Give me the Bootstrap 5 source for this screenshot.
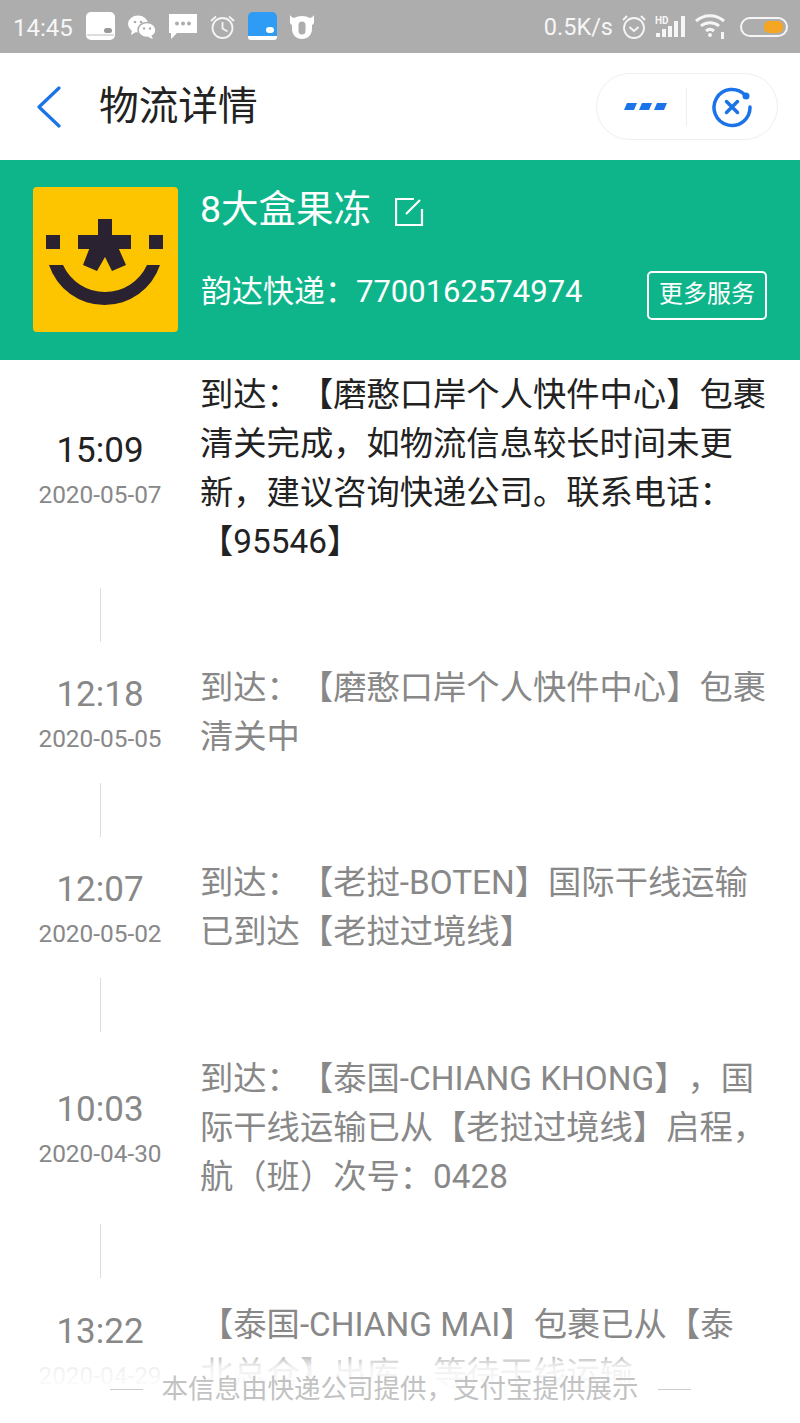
<!DOCTYPE html>
<html lang="zh">
<head>
    <meta charset="UTF-8">
    <meta name="viewport" content="width=device-width, initial-scale=1">
    <title>物流详情</title>

    <link href="https://cdn.jsdelivr.net/npm/bootstrap@5.3.2/dist/css/bootstrap.min.css" rel="stylesheet">

    <style>
        body {
            background-color: #fff;
            font-family: Roboto, "Noto Sans CJK SC", sans-serif;
            text-spacing-trim: space-all;
        }

        .phone-page {
            height: 1423px;
            overflow: hidden;
            position: relative;
        }

        /* Barra de estado */
        .status-bar {
            height: 53px;
            background-color: #adadad;
            color: #f6f6f6;
            font-size: 23.500px;
            padding: 0 12px 0 13px;
        }

        .status-left { gap: 13px; }
        .status-right { gap: 9px; }
        .status-clock { font-size: 24px; width: 60px; padding-top: 3px; }
        .status-speed { padding-top: 3px; }

        /* Cabecera */
        .top-nav {
            height: 107px;
            padding-left: 36px;
            padding-right: 22px;
        }

        .nav-title {
            font-size: 39.700px;
            color: #222;
            margin-left: 38px;
        }

        .capsule {
            width: 182px;
            height: 67px;
            border: 1px solid #eee;
            border-radius: 34px;
        }

        .capsule-part { width: 90px; }
        .capsule-dots { width: 89px; }

        .capsule-line {
            width: 1px;
            height: 38px;
            background-color: #eee;
        }

        /* Bloque verde */
        .parcel-head {
            height: 200px;
            background-color: #0fb58a;
            color: #fff;
            padding: 27px 33px 0 33px;
        }

        .parcel-info { margin-left: 23px; }

        .parcel-name {
            font-size: 37.500px;
            line-height: 44px;
            height: 44px;
            margin-left: -1px;
        }

        .edit-mark {
            margin-left: 24px;
            margin-top: 5px;
        }

        .parcel-number {
            font-size: 31px;
            line-height: 44px;
            margin-top: 39px;
        }

        .more-btn {
            width: 120px;
            height: 49px;
            border: 2px solid #fff;
            border-radius: 5px;
            font-size: 24px;
            line-height: 43px;
            color: #fff;
            text-align: center;
            margin-top: 40px;
        }

        /* Lista de eventos */
        .track-list { padding-top: 10px; }

        .track-when {
            width: 200px;
            flex-shrink: 0;
            text-align: center;
            color: #888;
            margin-top: 9px;
        }

        .track-time {
            font-size: 35px;
            line-height: 44px;
        }

        .track-date {
            font-size: 24.400px;
            line-height: 44px;
        }

        .track-text {
            font-size: 33.300px;
            line-height: 49px;
            color: #888;
            white-space: nowrap;
        }

        .track-now .track-time,
        .track-now .track-text { color: #222; }

        .track-link {
            width: 1px;
            height: 54px;
            margin: 22px 0 21px 100px;
            background-color: #ddd;
        }

        .track-link-after { margin-bottom: 22px; }
        .track-link-before { margin-top: 23px; }

        /* Pie difuminado */
        .fade-foot {
            position: absolute;
            left: 0;
            right: 0;
            bottom: 0;
            height: 78px;
            background: linear-gradient(rgba(255, 255, 255, 0), rgba(255, 255, 255, .88) 28%, #fff 62%);
            color: #c2c2c2;
            font-size: 26.500px;
        }

        .foot-inner {
            position: absolute;
            left: 0;
            right: 0;
            top: 22px;
            line-height: 44px;
            gap: 19px;
        }

        .foot-dash {
            width: 33px;
            height: 1px;
            background-color: #ccc;
        }
    </style>
</head>

<body>

<div class="phone-page">

    <!-- Barra de estado -->
    <div class="status-bar d-flex align-items-center justify-content-between">
        <div class="d-flex align-items-center status-left">
            <span class="status-clock">14:45</span>
            <svg width="29" height="29" viewBox="0 0 29 29"><rect x="0" y="0" width="29" height="28" rx="5" fill="#fff"/><path d="M1 23h27" stroke="#bbb" stroke-width="1"/><rect x="18" y="16" width="8" height="5" rx="2.500" fill="#999"/></svg>
            <svg width="28" height="24" viewBox="0 0 28 24"><ellipse cx="10" cy="9" rx="10" ry="8.500" fill="#fff"/><path d="M4 15l-1 5 5-3z" fill="#fff"/><ellipse cx="19" cy="15" rx="9" ry="7.500" fill="#fff" stroke="#adadad" stroke-width="1.500"/><path d="M23 20l2 4-5-2z" fill="#fff"/><circle cx="7" cy="7" r="1.300" fill="#adadad"/><circle cx="13" cy="7" r="1.300" fill="#adadad"/><circle cx="16" cy="13.500" r="1.200" fill="#adadad"/><circle cx="22" cy="13.500" r="1.200" fill="#adadad"/></svg>
            <svg width="28" height="25" viewBox="0 0 28 25"><path d="M0 0h28v19H8l-6 6v-6H0z" fill="#fff"/><circle cx="8" cy="9.500" r="2" fill="#adadad"/><circle cx="14" cy="9.500" r="2" fill="#adadad"/><circle cx="20" cy="9.500" r="2" fill="#adadad"/></svg>
            <svg width="25" height="24" viewBox="0 0 25 24" fill="none" stroke="#f4f4f4" stroke-width="1.800"><circle cx="12.500" cy="13" r="10"/><path d="M12.500 7v6.500l5 3M1 6l5-4.500M24 6l-5-4.500"/></svg>
            <svg width="29" height="29" viewBox="0 0 29 29"><rect x="0" y="0" width="29" height="28" rx="5" fill="#2e9bf5"/><path d="M0 24h29v1a3 3 0 0 1-3 3H3a3 3 0 0 1-3-3z" fill="#fff"/><rect x="18" y="15" width="8" height="6" rx="3" fill="#fff"/></svg>
            <svg width="24" height="24" viewBox="0 0 24 24"><path fill-rule="evenodd" d="M0 0c1 1.500 2 2.500 4 3 2.300-1.300 5-2 8-2s5.700.7 8 2c2-.5 3-1.500 4-3v7c0 1.500-.8 2.500-2 3v4c0 6-4.500 10-10 10S2 20 2 14v-4C.8 9.500 0 8.500 0 7zM8.500 10v6a3.500 3.500 0 0 0 7 0v-6a3.500 3.500 0 0 0-7 0z" fill="#fff"/></svg>
        </div>
        <div class="d-flex align-items-center status-right">
            <span class="status-speed">0.5K/s</span>
            <svg width="24" height="24" viewBox="0 0 24 24" fill="none" stroke="#f6f6f6" stroke-width="1.800"><circle cx="12" cy="13" r="10"/><path d="M7.500 12l4.500 4 4.500-4M1 5l4-4M23 5l-4-4"/></svg>
            <svg width="31" height="23" viewBox="0 0 31 23"><text x="0" y="9" font-size="10" font-weight="700" fill="#f6f6f6" font-family="Roboto, sans-serif">HD</text><g fill="#f6f6f6"><rect x="1" y="18" width="4" height="4"/><rect x="7" y="14" width="4" height="8"/><rect x="13" y="11" width="4" height="11"/><rect x="19" y="6" width="4" height="16"/><rect x="26" y="1" width="4" height="21"/></g></svg>
            <svg width="32" height="27" viewBox="0 0 32 27" fill="none" stroke="#f6f6f6" stroke-width="3"><path d="M1 8c8-7 20-7 28 0M6 13c5-4.500 13-4.500 18 0M11 18c2.500-2 5.500-2 8 0"/><circle cx="15" cy="22" r="2" fill="#f6f6f6" stroke="none"/><rect x="26" y="19" width="3" height="7" fill="#f6f6f6" stroke="none"/></svg>
            <svg class="ms-1" width="48" height="20" viewBox="0 0 48 20"><rect x="1" y="1" width="46" height="18" rx="9" fill="none" stroke="#f6f6f6" stroke-width="2"/><rect x="24" y="4" width="19" height="12" rx="5" fill="#f5a623"/></svg>
        </div>
    </div>

    <!-- Cabecera -->
    <div class="top-nav d-flex align-items-center">
        <svg width="25" height="42" viewBox="0 0 25 42" fill="none"><path d="M23 2L3 21l20 19" stroke="#1a73e8" stroke-width="3.200" stroke-linecap="round" stroke-linejoin="round"/></svg>
        <div class="nav-title">物流详情</div>
        <div class="capsule ms-auto d-flex align-items-center">
            <div class="capsule-dots d-flex justify-content-center">
                <svg class="ms-2" width="43" height="7" viewBox="0 0 43 7" fill="#1a73e8"><path d="M3 0h10l-3 7H0zM18 0h10l-3 7H15zM33 0h10l-3 7H30z"/></svg>
            </div>
            <div class="capsule-line"></div>
            <div class="capsule-part d-flex justify-content-center">
                <svg width="42" height="42" viewBox="0 0 42 42" fill="none"><path d="M34 9A18 18 0 1 0 39 21" stroke="#1a73e8" stroke-width="3.500" stroke-linecap="round"/><circle cx="35" cy="10" r="3.500" fill="#1a73e8"/><path d="M15.500 15.500l11 11M26.500 15.500l-11 11" stroke="#1a73e8" stroke-width="3.500" stroke-linecap="round"/></svg>
            </div>
        </div>
    </div>

    <!-- Bloque verde con el paquete -->
    <div class="parcel-head d-flex">
        <svg class="flex-shrink-0" width="145" height="145" viewBox="0 0 145 145">
            <rect width="145" height="145" rx="4" fill="#fdc500"/>
            <g fill="#2a2230">
                <rect x="13" y="48" width="14" height="14"/>
                <rect x="116" y="48" width="14" height="14"/>
                <rect x="65" y="32" width="14" height="30"/>
                <rect x="45" y="48" width="53" height="14"/>
                <path d="M57 60L50 78l14 6 8-14 7 14 14-6-8-18z"/>
                <path d="M16 78A58.500 58.500 0 0 0 127 78H114A46.200 46.200 0 0 1 30 78Z"/>
            </g>
        </svg>
        <div class="parcel-info flex-grow-1">
            <div class="parcel-name d-flex align-items-center">
                8大盒果冻
                <svg class="edit-mark" width="29" height="28" viewBox="0 0 29 28" fill="none" stroke="#fff" stroke-width="2.200"><path d="M27 11v16H1V1h18M11 16L25 2"/></svg>
            </div>
            <div class="d-flex justify-content-between">
                <div class="parcel-number">韵达快递：7700162574974</div>
                <div class="more-btn">更多服务</div>
            </div>
        </div>
    </div>

    <!-- Lista de eventos -->
    <div class="track-list">
        <div class="d-flex align-items-center track-now">
            <div class="track-when">
                <div class="track-time">15:09</div>
                <div class="track-date">2020-05-07</div>
            </div>
            <div class="track-text">到达：【磨憨口岸个人快件中心】包裹<br>清关完成，如物流信息较长时间未更<br>新，建议咨询快递公司。联系电话：<br>【95546】</div>
        </div>
        <div class="track-link"></div>

        <div class="d-flex align-items-center">
            <div class="track-when">
                <div class="track-time">12:18</div>
                <div class="track-date">2020-05-05</div>
            </div>
            <div class="track-text">到达：【磨憨口岸个人快件中心】包裹<br>清关中</div>
        </div>
        <div class="track-link"></div>

        <div class="d-flex align-items-center">
            <div class="track-when">
                <div class="track-time">12:07</div>
                <div class="track-date">2020-05-02</div>
            </div>
            <div class="track-text">到达：【老挝-BOTEN】国际干线运输<br>已到达【老挝过境线】</div>
        </div>
        <div class="track-link track-link-after"></div>

        <div class="d-flex align-items-center">
            <div class="track-when">
                <div class="track-time">10:03</div>
                <div class="track-date">2020-04-30</div>
            </div>
            <div class="track-text">到达：【泰国-CHIANG KHONG】，国<br>际干线运输已从【老挝过境线】启程，<br>航（班）次号：0428</div>
        </div>
        <div class="track-link track-link-before track-link-after"></div>

        <div class="d-flex align-items-center">
            <div class="track-when">
                <div class="track-time">13:22</div>
                <div class="track-date">2020-04-29</div>
            </div>
            <div class="track-text">【泰国-CHIANG MAI】包裹已从【泰<br>北总仓】出库，等待干线运输</div>
        </div>
    </div>

    <!-- Pie difuminado sobre la lista -->
    <div class="fade-foot">
        <div class="foot-inner d-flex align-items-center justify-content-center">
            <span class="foot-dash"></span>
            <span>本信息由快递公司提供，支付宝提供展示</span>
            <span class="foot-dash"></span>
        </div>
    </div>
</div>

<script src="https://cdn.jsdelivr.net/npm/bootstrap@5.3.2/dist/js/bootstrap.bundle.min.js"></script>
</body>
</html>
